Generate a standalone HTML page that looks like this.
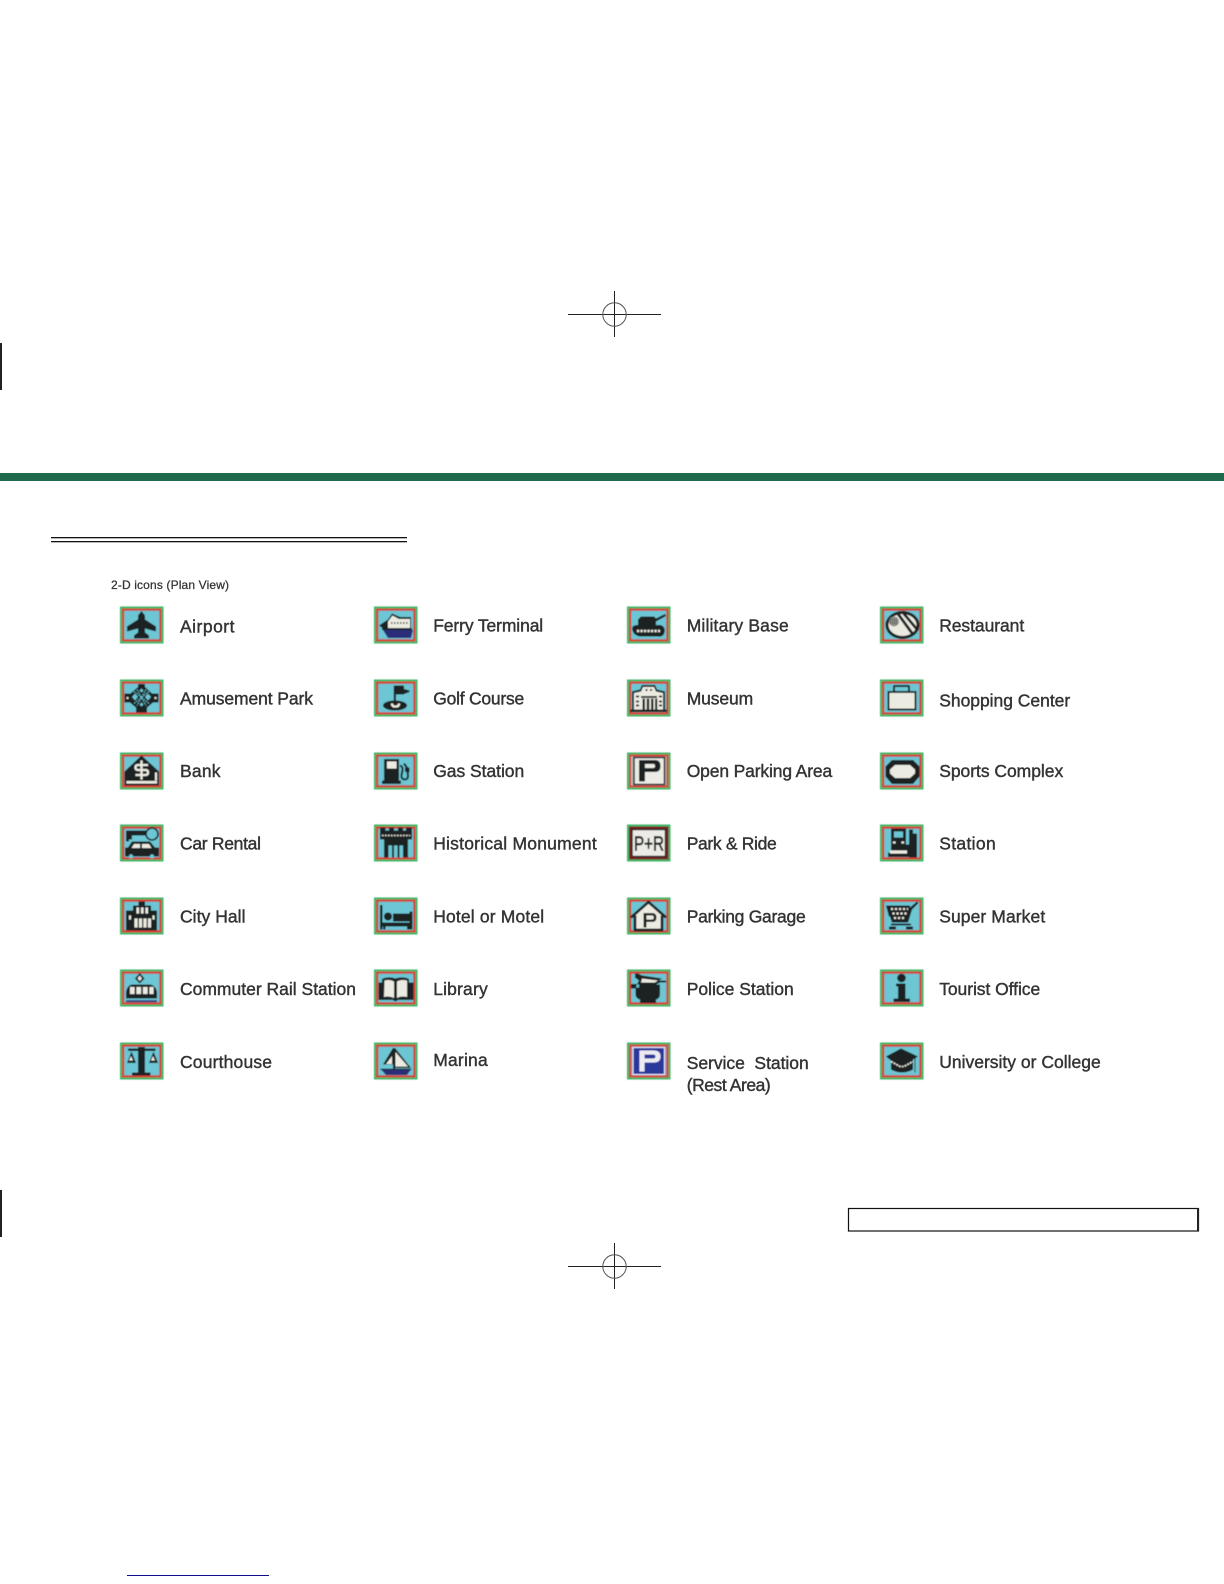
<!DOCTYPE html>
<html><head><meta charset="utf-8"><title>2-D icons (Plan View)</title>
<style>
html,body{margin:0;padding:0;background:#fff;width:1224px;height:1584px;overflow:hidden}
svg{display:block}
text{font-family:"Liberation Sans",sans-serif;font-size:17.5px;fill:#333;stroke:#333;stroke-width:.4px}
.d{fill:#1c2020}.w{fill:#ecebe2}.c{fill:#6cc6d4}.n{fill:#2a2f78}
.ls{fill:none;stroke:#1c2020;stroke-width:2}.lw{fill:none;stroke:#ecebe2;stroke-width:2}
</style></head><body>
<svg width="1224" height="1584" viewBox="0 0 1224 1584" xmlns="http://www.w3.org/2000/svg">
<defs>
<filter id="b" x="-5%" y="-5%" width="110%" height="110%"><feGaussianBlur stdDeviation="0.4"/></filter>
<g id="f"><rect width="43.500" height="37" fill="#3fb568"/><rect x="2" y="2" width="39.500" height="33" fill="#d6403a"/><rect x="4.200" y="4.200" width="35.100" height="28.600" fill="#6cc6d4"/></g>
</defs>
<rect width="1224" height="1584" fill="#fff"/>

<!-- crop marks -->
<g fill="none" stroke="#222" stroke-width="1">
<path d="M568 314.500H661M614.500 291V337"/><circle cx="614.500" cy="314.500" r="11.700" stroke="#555"/>
<path d="M568 1266.500H661M614.500 1243V1289"/><circle cx="614.500" cy="1266.500" r="11.700" stroke="#555"/>
</g>
<rect x="0" y="343" width="2" height="47" fill="#222"/>
<rect x="0" y="1190" width="2" height="47" fill="#222"/>

<rect x="0" y="473" width="1224" height="8" fill="#1f6a4b"/>
<rect x="51" y="537" width="356" height="1.300" fill="#111"/>
<rect x="51" y="541" width="356" height="1.300" fill="#111"/>
<text x="111" y="589" textLength="118" style="font-size:12px;stroke-width:.25px">2-D icons (Plan View)</text>

<rect x="848.500" y="1208.500" width="350" height="22.500" fill="none" stroke="#111" stroke-width="1.200"/>
<rect x="1197" y="1208" width="2" height="23" fill="#222"/>
<rect x="127" y="1575" width="142" height="1" fill="#10108c"/>

<!-- labels -->
<g transform="translate(0,0.700)">
<text x="180" y="632" textLength="54.500">Airport</text>
<text x="180" y="704" textLength="133">Amusement Park</text>
<text x="180" y="776.500" textLength="40.500">Bank</text>
<text x="180" y="849" textLength="81">Car Rental</text>
<text x="180" y="922" textLength="65.500">City Hall</text>
<text x="180" y="994.500" textLength="176">Commuter Rail Station</text>
<text x="180" y="1067.500" textLength="92">Courthouse</text>

<text x="433.200" y="631" textLength="110">Ferry Terminal</text>
<text x="433.200" y="704" textLength="91">Golf Course</text>
<text x="433.200" y="776.500" textLength="91">Gas Station</text>
<text x="433.200" y="849" textLength="163.500">Historical Monument</text>
<text x="433.200" y="922" textLength="111">Hotel or Motel</text>
<text x="433.200" y="994.500" textLength="54.500">Library</text>
<text x="433.200" y="1065.500" textLength="54.500">Marina</text>

<text x="686.700" y="631" textLength="102">Military Base</text>
<text x="686.700" y="704" textLength="66.500">Museum</text>
<text x="686.700" y="776.500" textLength="145.500">Open Parking Area</text>
<text x="686.700" y="849" textLength="90">Park &amp; Ride</text>
<text x="686.700" y="922" textLength="119">Parking Garage</text>
<text x="686.700" y="994.500" textLength="107">Police Station</text>
<text x="686.700" y="1068.500" textLength="122" xml:space="preserve">Service  Station</text>
<text x="686.700" y="1090.500" textLength="84">(Rest Area)</text>

<text x="939.200" y="631" textLength="85">Restaurant</text>
<text x="939.200" y="706" textLength="131">Shopping Center</text>
<text x="939.200" y="776.500" textLength="124">Sports Complex</text>
<text x="939.200" y="849" textLength="56.500">Station</text>
<text x="939.200" y="922" textLength="106">Super Market</text>
<text x="939.200" y="994.500" textLength="101">Tourist Office</text>
<text x="939.200" y="1067.500" textLength="161.500">University or College</text>
</g>

<g filter="url(#b)" transform="translate(0,0.500)">
<!-- COLUMN 1 -->
<g transform="translate(120,606)"><use href="#f"/>
<path class="d" d="M21.500 4.500L25 9V13L36 20V25L25 22V26L29 29V32H14V29L18 26V22L7 25V20L18 13V9Z"/></g>

<g transform="translate(120,679)"><use href="#f"/>
<path class="d" d="M18 4.500H25V7.500L32 14H38.500V23H33L27 28V33H16V28L10 23H4.500V14H10.500L18 7.500Z"/>
<path class="c" d="M15 14l3 3.500-3 3.500-3-3.500zM28 14l3 3.500-3 3.500-3-3.500zM21.500 9l2 2-2 2-2-2zM21.500 23l2 2-2 2-2-2z"/>
<path fill="none" stroke="#6cc6d4" stroke-width="1.100" stroke-dasharray="1.500 1" d="M17 10L26 26M26 10L17 26M14 12L29 24M29 12L14 24"/>
<circle class="w" cx="7.500" cy="18.500" r="1.100"/><circle class="w" cx="35.500" cy="18.500" r="1.100"/></g>

<g transform="translate(120,752)"><use href="#f"/>
<path class="d" d="M21.500 3L39 19V33H4.500V19Z"/>
<path class="w" d="M6.500 28.500H37V31H6.500zM35 20h2v8h-2z"/>
<path class="lw" style="stroke-width:2.300" d="M21.500 8V27M28 12.500H18Q15.500 12.500 15.500 15T18 17.500H25.500Q28 17.500 28 20T25.500 22.500H15.500"/></g>

<g transform="translate(120,824)"><use href="#f"/>
<path class="d" d="M6 6H30V11H12V15H9V17H6Z"/>
<circle cx="32" cy="9.500" r="6" fill="#6cc6d4" stroke="#1c2020" stroke-width="1.600"/>
<path class="d" d="M12 17H30L35 23H39V32H5V23H8Z"/>
<path class="w" d="M14 19.500H20V23.500H11.500ZM22 19.500H29L31.500 23.500H22Z"/>
<circle class="c" cx="11" cy="32" r="2.200"/><circle class="c" cx="32" cy="32" r="2.200"/></g>

<g transform="translate(120,897)"><use href="#f"/>
<path class="d" d="M18.500 4H25V8H31V13H37V33H6V13H13V8H18.500Z"/>
<path class="w" d="M16.500 10h2.500v6h-2.500zM21 10h2.500v6H21zM25.500 10h2.500v6h-2.500zM14.500 21h3v9h-3zM19 21h3v9h-3zM23.500 21h3v9h-3zM28 21h3v9h-3zM9 18h2v4H9zM32.500 18h2v4h-2z"/></g>

<g transform="translate(120,969)"><use href="#f"/>
<path class="d" d="M19.700 3.500L24.500 9L19.700 14L15 9Z"/>
<path class="w" d="M19.700 6L22 9L19.700 11.500L17.500 9Z"/>
<path class="d" d="M12 15H30Q36 16 37 23V29H6V23Q7 16 12 15Z"/>
<path class="w" d="M10 17.500h4.500v7H10zM16.500 17.500h4.500v7h-4.500zM23 17.500h4.500v7H23zM29.500 17.500h4v7h-4z"/>
<rect x="6" y="30.800" width="31" height="1.800" fill="#2a2f78"/></g>

<g transform="translate(120,1042)"><use href="#f"/>
<path class="d" d="M18 4.500H25V30H30.500V33H12V30H18Z"/>
<path class="d" d="M8 6h27.500v2.500H8z"/>
<path class="d" d="M10 9h1.500l-4.500 11.500h9L11.500 9zM32 9h1.500l-4.500 11.500h9L33.500 9z"/>
<path class="w" d="M11 13.500l2 4.500H9zM33 13.500l2 4.500h-4z"/></g>

<!-- COLUMN 2 -->
<g transform="translate(374,606)"><use href="#f"/>
<path class="d" d="M5 19L14 13L18 7L26 10.500H37V24H12Z"/>
<path class="w" d="M14 15L18.500 9L25 12.500H36V23H14Z"/>
<path fill="none" stroke="#1c2020" stroke-width="1.500" stroke-dasharray="1.500 1.500" d="M17 16.500H35"/>
<path class="d" d="M8 21.500H38V23.500H8z"/>
<path class="n" d="M9 23.500H39L37 31.500H14Z"/></g>

<g transform="translate(374,679)"><use href="#f"/>
<path class="d" d="M19.800 6H22V23H19.800Z"/><path class="d" d="M22 6H30V9.500L35.500 11V12.500L30 14.500V15H22Z"/>
<ellipse class="d" cx="21" cy="26" rx="12" ry="5"/>
<path class="w" d="M17 24h2l1 2h3l1-2h2v2l-2 2h-5l-2-2z"/></g>

<g transform="translate(374,752)"><use href="#f"/>
<path class="d" d="M10 6.500H25V28H27V31.500H8V28H10Z"/>
<path class="w" d="M13 9H22.500V16H13Z"/>
<path fill="none" stroke="#1c2020" stroke-width="2" d="M26 13C31 15 27 21 27.500 24C28 28 33.500 28 34 24L33.500 16L30 11"/>
<path class="d" d="M31 15h4.500v4.500H31z"/></g>

<g transform="translate(374,824)"><use href="#f"/>
<path class="d" d="M6 3H11.500V6H15V3H20V6H24V3H29V6H32V3H38V15H34V33H10V15H6Z"/>
<path fill="none" stroke="#ecebe2" stroke-width="1.400" stroke-dasharray="1.500 1.500" d="M8 11H36"/>
<path class="c" d="M14.500 21h3.500v12h-3.500zM20 21h3.500v12H20zM25.500 21h3.500v12h-3.500z"/></g>

<g transform="translate(374,897)"><use href="#f"/>
<path class="d" d="M6 7.500H8.500V32H6ZM35.500 14H38.500V32H35.500ZM8 25H36V29H8ZM9 29H11.500V32H9ZM33 29H35.500V32H33Z"/>
<circle class="d" cx="14" cy="19" r="4"/>
<path class="d" d="M19 16H36V24H19Z"/></g>

<g transform="translate(374,969)"><use href="#f"/>
<path class="d" d="M8 9.500Q14 6.500 21.500 9Q29 6.500 35 9.500V13H39.500V30.500H24Q21.500 33 19 30.500H4.500V13H8Z"/>
<path class="w" d="M10.500 11Q16 9.500 20 12V28.500Q15 26 10 27.500ZM23 12Q27 9.500 33 11V27.500Q27 26 23 28.500Z"/></g>

<g transform="translate(374,1042)"><use href="#f"/>
<path class="d" d="M19 5.500H21L37 25.500H21V27H19V22H9Z"/>
<path class="w" d="M21.500 9.500L34 24H21.500ZM18 13.500V21.500H12Z"/>
<path class="n" d="M7 27H37L33 32.500H12Z"/><path d="M6.500 26.800H37.500" stroke="#1c2020" stroke-width="1.200"/></g>

<!-- COLUMN 3 -->
<g transform="translate(627,606)"><use href="#f"/>
<path class="d" d="M14 10H27L29 12L38 7.500L39 9.500L29 15V19H11V13Z"/>
<path class="d" d="M10 18.500H34Q39 21 37.500 26T31 30H13Q7 29 5.500 24T10 18.500Z"/>
<path fill="none" stroke="#ecebe2" stroke-width="2.500" stroke-dasharray="2.200 1.300" d="M10 24.500H33"/></g>

<g transform="translate(627,679)"><use href="#f"/>
<path class="d" d="M5 12L13 10L15 5.500H28L30 10L38 12V30H40V32.500H3V30H5Z"/>
<path class="w" d="M7 13.500L14 12L16 7.500H27L29 12L36 13.500V30H7Z"/>
<path class="d" d="M14 16.500H30V18.500H14ZM15.500 19h2.400V30h-2.400zM19.800 19h2.400V30h-2.400zM24 19h2.400V30H24zM28 19h2.200V30H28zM9 16h3v2H9zM9 21h3v2H9zM9 25h3v2H9zM32 16h3v2h-3zM32 21h3v2h-3zM32 25h3v2h-3zM18.500 9.500h2v2h-2zM23 9.500h2v2h-2z"/></g>

<g transform="translate(627,752)"><use href="#f"/>
<rect x="4" y="4" width="35.500" height="29" fill="#b8b8b4"/>
<rect x="7" y="5" width="30.500" height="27" fill="#ecebe6" stroke="#1c2020" stroke-width="1.500"/>
<path class="d" d="M12 7.500H28Q33.500 7.500 33.500 13.500T28 19.500H18V29H12ZM18 11.500V15.500H26.500Q28 15.500 28 13.500T26.500 11.500Z"/></g>

<g transform="translate(627,824)"><rect width="43.500" height="37" fill="#3fb568"/>
<rect x="2" y="2" width="39.500" height="33" fill="#7a2020"/>
<rect x="5" y="5" width="33.500" height="27" fill="#ecebe6" stroke="#1c2020" stroke-width="1.400"/>
<text x="7" y="26" textLength="30" lengthAdjust="spacingAndGlyphs" style="font-size:20px;fill:#1c2020;stroke:#1c2020;stroke-width:.7px">P+R</text></g>

<g transform="translate(627,897)"><use href="#f"/>
<path class="w" d="M21.500 6.500L36 18V33H7V18Z"/>
<path class="ls" style="stroke-width:2.700" d="M4 20L21.500 4.500L39 20M8 18V32.500H35V18"/>
<path class="d" d="M16.500 15.500H25Q29.500 15.500 29.500 20T25 24.500H19.500V30H16.500ZM19.500 18V22H25Q26.800 22 26.800 20T25 18Z"/></g>

<g transform="translate(627,969)"><use href="#f"/>
<path class="d" d="M8 4H11L15 6L35 9L32 11H39V13H33L29 15H10L12 11L8 8Z"/>
<path class="w" d="M15 9L31 11L28 13H14Z"/>
<path class="d" d="M4 14.500H10L9 18H12V15H33V24Q33 29 29 30V33.500H13V30Q8.500 29 8.500 24V19H4Z"/></g>

<g transform="translate(627,1042)"><use href="#f"/>
<rect x="4" y="4" width="35.500" height="29" fill="#9a9ab4"/>
<rect x="6" y="5" width="31.500" height="27" fill="#2b389c" stroke="#ecebf2" stroke-width="1"/>
<path fill="#ecebf2" d="M12.500 8H27Q33.500 8 33.500 14T27 20H17.500V29H12.500ZM17.500 12V16H26Q28.500 16 28.500 14T26 12Z"/></g>

<!-- COLUMN 4 -->
<g transform="translate(880,606)"><use href="#f"/>
<ellipse class="d" cx="22.500" cy="18.500" rx="17" ry="14"/>
<ellipse class="w" cx="22.500" cy="18.500" rx="14" ry="11"/>
<path fill="none" stroke="#1c2020" stroke-width="2.800" d="M17 6L33 28M22 5L38 24"/>
<circle cx="14" cy="15" r="5" fill="#8f908c"/>
<path fill="none" stroke="#1c2020" stroke-width="1" stroke-dasharray="1 1" d="M10 13H18M10 15H18M10 17H18"/></g>

<g transform="translate(880,679)"><use href="#f"/>
<path class="ls" d="M14 12V7.500Q14 6.500 15 6.500H28Q29 6.500 29 7.500V12"/>
<rect x="8.500" y="12.500" width="27" height="17.500" fill="#ecebe2" stroke="#1c2020" stroke-width="2"/></g>

<g transform="translate(880,752)"><use href="#f"/>
<path class="d" d="M12 7.500H33L39.500 14V24L33 31.500H12L5.500 24V14Z"/>
<path class="w" d="M15 12.500H30L35 17V21L30 25.500H15L10 21V17Z"/></g>

<g transform="translate(880,824)"><use href="#f"/>
<path class="d" d="M11 4H26V20H30V32.500H8V28H11Z"/>
<path class="c" d="M14 7H23V13H14Z"/><path class="w" d="M13 17h2.500v2H13zM21.500 17h2.500v2h-2.500z"/>
<path class="w" d="M10 26H27V29H10Z"/>
<path class="d" d="M29 5H33V9H37V33H29Z"/></g>

<g transform="translate(880,897)"><use href="#f"/>
<path class="d" d="M6 8H30V10L37 4L38.500 5.500L32 12L28 25H12L10 19H9Z"/>
<path class="d" d="M11 26H31V28H11ZM9 29H16V32H9ZM26 29H33V32H26Z"/>
<path fill="none" stroke="#ecebe2" stroke-width="2" stroke-dasharray="2 2" d="M11 11.500H28M12.500 16H27M14 20.500H26"/></g>

<g transform="translate(880,969)"><use href="#f"/>
<circle class="d" cx="21.500" cy="8.500" r="4.300"/>
<path class="d" d="M16 14H25.500V29H30V32.500H13.500V29H18V17H16Z"/></g>

<g transform="translate(880,1042)"><use href="#f"/>
<path class="d" d="M21 6L38 14L33 17V27Q22 33 11 27V18L6 14Z"/>
<path fill="none" stroke="#ecebe2" stroke-width="1.600" stroke-dasharray="2 1" d="M11 19L20 24H24L33 19"/>
<path d="M35 15V30" stroke="#1c2020" stroke-width="1"/></g>
</g>
</svg>
</body></html>
